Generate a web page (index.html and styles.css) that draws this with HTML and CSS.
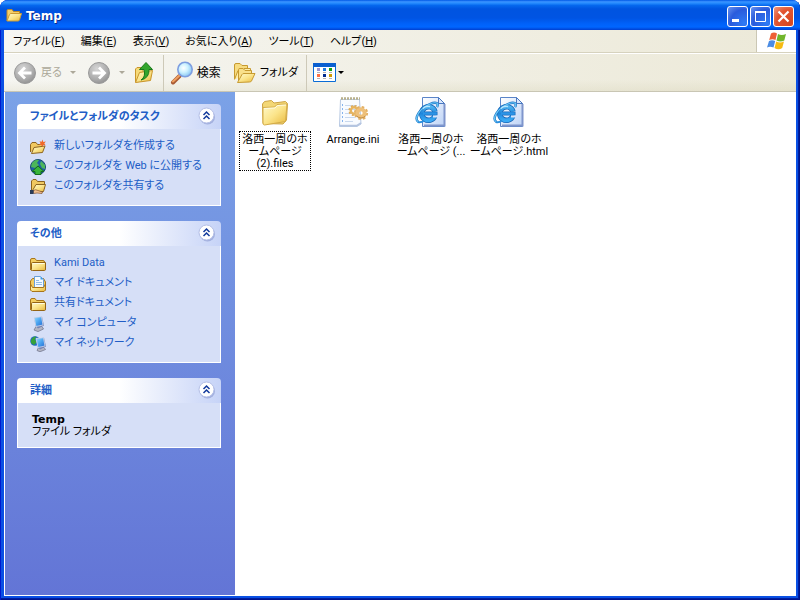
FILE: index.html
```html
<!DOCTYPE html>
<html lang="ja">
<head>
<meta charset="utf-8">
<title>Temp</title>
<link rel="stylesheet" href="styles.css">
</head>
<body>
<svg class="defs" aria-hidden="true">
  <defs>
    <linearGradient id="gold" x1="0" y1="0" x2="1" y2="1"><stop offset="0" stop-color="#fffbd0"/><stop offset=".5" stop-color="#fbe48a"/><stop offset="1" stop-color="#e8b83c"/></linearGradient>
    <linearGradient id="paper" x1="0" y1="0" x2="1" y2="1"><stop offset="0" stop-color="#ffffff"/><stop offset="1" stop-color="#bcd2f6"/></linearGradient>
    <radialGradient id="grey" cx=".4" cy=".3" r=".75"><stop offset="0" stop-color="#d6d6d6"/><stop offset=".7" stop-color="#a9a9a9"/><stop offset="1" stop-color="#8f8f8f"/></radialGradient>
    <radialGradient id="lens" cx=".4" cy=".4" r=".6"><stop offset="0" stop-color="#ffffff"/><stop offset=".5" stop-color="#cdf2ff"/><stop offset="1" stop-color="#8cc8f4"/></radialGradient>
    <linearGradient id="eblue" x1="0" y1="0" x2="0" y2="1"><stop offset="0" stop-color="#4fb4f0"/><stop offset=".5" stop-color="#1e86dc"/><stop offset="1" stop-color="#3aaaf4"/></linearGradient>
    <linearGradient id="screen" x1="0" y1="0" x2="1" y2="1"><stop offset="0" stop-color="#9adcff"/><stop offset=".5" stop-color="#4aa4f0"/><stop offset="1" stop-color="#2468d0"/></linearGradient>
    <symbol id="folder" viewBox="0 0 16 16">
      <path d="M.5 13.500V4Q.5 2.500 2 2.500H5L6.500 4.500H13Q14.500 4.500 14.500 6V13.500Z" fill="#f3cd60" stroke="#a8751a"/>
      <path d="M1.500 13.500V7.500Q1.500 6.500 2.500 6.500H15.500V13Q15.500 14.500 14.500 14.500H2.500Q.5 14.500 .5 13" fill="url(#gold)" stroke="#946414"/>
      <path d="M3 7.500H14.500" stroke="#fffbe0"/>
    </symbol>
    <symbol id="chevrons" viewBox="0 0 18 18">
      <circle cx="9.500" cy="10" r="7.500" fill="#8796cf" opacity=".6"/>
      <circle cx="8.500" cy="8.500" r="7.500" fill="#fff" stroke="#b4bfe6"/>
      <path d="M5.500 8L8.500 5L11.500 8M5.500 12L8.500 9L11.500 12" fill="none" stroke="#123a9c" stroke-width="1.500"/>
    </symbol>
    <symbol id="iepage" viewBox="0 0 32 32">
      <path d="M7.500 1.500H23.500L29.500 7.500V30.500H7.500Z" fill="url(#paper)" stroke="#5a84c8"/>
      <path d="M29.500 8V29.500H9" fill="none" stroke="#7f95cc" stroke-width="2"/>
      <path d="M23.500 1.500V7.500H29.500Z" fill="#d7e6fc" stroke="#4a78c0"/>
      <path d="M20 19.500A6.800 6.800 0 1 1 20 15.500" fill="none" stroke="#1666b8" stroke-width="5.400"/>
      <path d="M8 17.500H22.500" stroke="#1666b8" stroke-width="4"/>
      <path d="M20 19.500A6.800 6.800 0 1 1 20 15.500" fill="none" stroke="url(#eblue)" stroke-width="4"/>
      <path d="M8 17.500H21.800" stroke="#2c94e6" stroke-width="2.600"/>
      <path d="M18 20.500H23" stroke="#d4e3fb" stroke-width="2"/>
      <path d="M3.500 26C-2 23 5 12 15 8C21 5.500 24.500 7 22 11" fill="none" stroke="#1b70c4" stroke-width="2.400"/>
      <path d="M3.500 26C-2 23 5 12 15 8C21 5.500 24.500 7 22 11" fill="none" stroke="#6acaf8" stroke-width="1.200"/>
      <path d="M3 26Q6 27 9 24.500" fill="none" stroke="#2c90de" stroke-width="2"/>
      <path d="M8 12.500Q11 9.500 15 10.500" fill="none" stroke="#b4e6ff" stroke-width="1.400"/>
    </symbol>
  </defs>
</svg>
<div class="window">
  <header class="titlebar">
    <svg class="icon16" viewBox="0 0 16 16"><path d="M1 13V2.500Q1 1.500 2.500 1.500H6L7.500 3.500H13.500V7" fill="#f4cf6a" stroke="#c08a24"/><path d="M1 13L3.500 6.500Q4 5.500 5 5.500H15.500L13.500 12Q13 13 12 13Z" fill="url(#gold)" stroke="#c99a34"/></svg>
    <h1 class="title">Temp</h1>
    <button class="caption" aria-label="最小化"><svg viewBox="0 0 21 21"><path d="M5 14.500H12" stroke="#fff" stroke-width="3"/></svg></button>
    <button class="caption" aria-label="最大化"><svg viewBox="0 0 21 21"><path d="M5.500 5.500H15.500V15.500H5.500Z" fill="none" stroke="#fff"/><path d="M5 6H16" stroke="#fff" stroke-width="2"/></svg></button>
    <button class="caption close" aria-label="閉じる"><svg viewBox="0 0 21 21"><path d="M5.500 5.500L15.500 15.500M15.500 5.500L5.500 15.500" stroke="#fff" stroke-width="2.200"/></svg></button>
  </header>

  <div class="client">
    <div class="menurow">
      <nav class="menus">
        <button>ファイル(<u>F</u>)</button>
        <button>編集(<u>E</u>)</button>
        <button>表示(<u>V</u>)</button>
        <button>お気に入り(<u>A</u>)</button>
        <button>ツール(<u>T</u>)</button>
        <button>ヘルプ(<u>H</u>)</button>
      </nav>
      <div class="flag">
        <svg viewBox="0 0 22 20">
          <path d="M5 2.500Q8 .5 11 2.500L9.500 9Q6.500 7.500 3.200 9Z" fill="#ee6035"/>
          <path d="M12 3Q15.500 5 20 3L18.300 9.500Q14.500 11.500 10.500 9.500Z" fill="#71b62c"/>
          <path d="M3 10Q6 8.500 9.200 10L7.500 16.500Q4 15 1 16.500Z" fill="#4b8ce4"/>
          <path d="M10.200 10.500Q14 12.500 18 10.500L16.200 17Q12.500 19.500 8.500 17Z" fill="#f6bb12"/>
        </svg>
      </div>
    </div>

    <div class="toolbar">
      <button class="tool dim">
        <svg class="icon24" viewBox="0 0 24 24"><circle cx="12" cy="12" r="10.500" fill="url(#grey)" stroke="#9a9a9a"/><path d="M18.500 12H7M12 6.500L6.500 12L12 17.500" fill="none" stroke="#fff" stroke-width="2.800"/></svg>
        <span>戻る</span><i class="arrow"></i>
      </button>
      <button class="tool dim forward" aria-label="進む">
        <svg class="icon24" viewBox="0 0 24 24"><circle cx="12" cy="12" r="10.500" fill="url(#grey)" stroke="#9a9a9a"/><path d="M5.500 12H17M12 6.500L17.500 12L12 17.500" fill="none" stroke="#fff" stroke-width="2.800"/></svg>
        <i class="arrow"></i>
      </button>
      <button class="tool up" aria-label="上へ">
        <svg class="icon24" viewBox="0 0 24 24"><path d="M2.500 21V8L4 6.500H8L10 8.500V20Z" fill="#f6da78" stroke="#c9962c"/><path d="M2.500 21.500L6.500 11.500L19.500 9.500L17.500 19.500Z" fill="url(#gold)" stroke="#c9962c"/><path d="M8 19Q13 16 11 8.500H6.500L13 1.500L19.500 8.500H16Q16.500 17 8 19Z" fill="#33a52c" stroke="#187a18"/></svg>
      </button>
      <span class="rule"></span>
      <button class="tool search">
        <svg class="icon24" viewBox="0 0 24 24"><path d="M9.500 15L3 21.500" stroke="#a85a34" stroke-width="4" stroke-linecap="round"/><path d="M9.500 14.500L3 20.500" stroke="#f0a060" stroke-width="2" stroke-linecap="round"/><circle cx="15" cy="8.500" r="7.200" fill="url(#lens)" stroke="#7e9ee0" stroke-width="1.600"/></svg>
        <span>検索</span>
      </button>
      <button class="tool folders">
        <svg class="icon24" viewBox="0 0 24 24"><path d="M1.500 18V4Q1.500 2.500 3 2.500H7L9 4.500H14.500V9" fill="#f7dc80" stroke="#c79a30"/><path d="M1.500 18.500L5 9.500H9L11 7.500H17.500V12" fill="#fdeeaa" stroke="#c79a30"/><path d="M5.500 20V8.500Q5.500 7.500 7 7.500H10L12 9.500H18.500V13" fill="#f9e08a" stroke="#c79a30"/><path d="M4.500 21.500L9 13.500Q9.500 12.500 11 12.500H22L18.500 20Q18 21 16.500 21Z" fill="url(#gold)" stroke="#c79a30"/></svg>
        <span>フォルダ</span>
      </button>
      <span class="rule"></span>
      <button class="tool views" aria-label="表示">
        <svg class="viewicon" viewBox="0 0 23 19"><path d="M.5 .5H22.500V18.500H.5Z" fill="#fff" stroke="#0a6cd6"/><path d="M0 2H23" stroke="#0a5fd0" stroke-width="4"/><path d="M4 5H7V8H4Z" fill="#9a94d0"/><path d="M10 5H13V8H10Z" fill="#1f7be0"/><path d="M16 5H19V8H16Z" fill="#10a010"/><path d="M4 11H7V14H4Z" fill="#ff7044"/><path d="M10 11H13V14H10Z" fill="#002b90"/><path d="M16 11H19V14H16Z" fill="#d09a00"/><path d="M4 9.500H7M10 9.500H13M16 9.500H19M4 15.500H7M10 15.500H13M16 15.500H19" stroke="#b4b4b4"/></svg>
        <i class="arrow"></i>
      </button>
    </div>

    <div class="body">
      <aside class="tasks">
        <section class="panel">
          <div class="head"><h2>ファイルとフォルダのタスク</h2><button class="toggle" aria-label="折りたたむ"><svg><use href="#chevrons"/></svg></button></div>
          <ul>
            <li><a href="#"><svg class="icon16" viewBox="0 0 16 16"><path d="M.5 13V5.500L2 3.500H6L7.500 5.500H12.500V8" fill="#f0c860" stroke="#8c6420"/><path d="M1.500 14.500L4 8.500L15 7L12.500 13.500Z" fill="url(#gold)" stroke="#8c6420"/><path d="M12.500 .5L13.300 3L15.800 2.500L14.300 4.600L15.800 6.500L13.300 6L12.200 8L11.300 6L9 6L10.500 4.300L9.500 2.300L11.700 2.800Z" fill="#f06a28"/></svg><span>新しいフォルダを作成する</span></a></li>
            <li><a href="#"><svg class="icon16" viewBox="0 0 16 16"><circle cx="8" cy="8" r="7.500" fill="#1f5fa8" stroke="#174b70"/><path d="M2 4Q5 0 9 1L7 4L9 6L5 9L1 8ZM11 2L15 6V10L12 9L10 5Z" fill="#4cb65a"/><path d="M8 7L14 12.500H11V15.500H5V12.500H2Z" fill="#38b53a" stroke="#136b1c"/></svg><span>このフォルダを Web に公開する</span></a></li>
            <li><a href="#"><svg class="icon16" viewBox="0 0 16 16"><path d="M1.500 11V2L3 .5H6L7.500 2.500H14.500V10" fill="#f0c860" stroke="#8c6420"/><path d="M2.500 11.500L6 5.500H15.500L13.500 12.500H7Z" fill="url(#gold)" stroke="#8c6420"/><path d="M3.500 11.500Q5.500 10 8 11.500L12.500 13L12 14.500L7 14L3.500 14.500Z" fill="#f0c090" stroke="#805030" stroke-width=".7"/><path d="M0 11H3.500V15H0Z" fill="#2b3c58"/></svg><span>このフォルダを共有する</span></a></li>
          </ul>
        </section>
        <section class="panel">
          <div class="head"><h2>その他</h2><button class="toggle" aria-label="折りたたむ"><svg><use href="#chevrons"/></svg></button></div>
          <ul>
            <li><a href="#"><svg class="icon16"><use href="#folder"/></svg><span>Kami Data</span></a></li>
            <li><a href="#"><svg class="icon16" viewBox="0 0 16 16"><path d="M.5 14V5L2.500 2.500H13.500L15.500 6V14Z" fill="#f2cb60" stroke="#a8751a"/><path d="M4.500 12V.5H10.500L13.500 3.500V12Z" fill="#f4faff" stroke="#6aa0d8"/><path d="M10.500 .5V3.500H13.500Z" fill="#3b9ce8"/><path d="M6 4.500H9M6 6.500H12M6 8.500H12" stroke="#92bde8"/><path d="M.5 8V14L2 15.500H14L15.500 14V8L13.500 11.500H2.500Z" fill="url(#gold)" stroke="#a8751a"/></svg><span>マイ ドキュメント</span></a></li>
            <li><a href="#"><svg class="icon16"><use href="#folder"/></svg><span>共有ドキュメント</span></a></li>
            <li><a href="#"><svg class="icon16" viewBox="0 0 16 16"><path d="M4 14L6 10.500H12L13.500 13L8 15.600Z" fill="#b4b6c4" stroke="#6a6e86" stroke-width=".7"/><path d="M4 1.500L12 .7L14 9.500L8 12.500L5.500 10Z" fill="#7684b4"/><path d="M4 1.500L11.500 .7L13 9L6 10.500Z" fill="url(#screen)" stroke="#d5dbee" stroke-width=".8"/></svg><span>マイ コンピュータ</span></a></li>
            <li><a href="#"><svg class="icon16" viewBox="0 0 16 16"><circle cx="5" cy="5" r="4.800" fill="#1e68c4"/><path d="M1 4Q3 0 6 .5L5 4L7 6L4 9L1 7Z" fill="#35a13a"/><path d="M7 14.500L8.500 11.500H14L15.500 13.500L10 15.800Z" fill="#b4b6c4" stroke="#6a6e86" stroke-width=".7"/><path d="M6 2.500L14 1.700L16 10.500L10 13.500L7.500 11Z" fill="#7684b4"/><path d="M6 2.500L13.500 1.700L15 10L8 11.500Z" fill="url(#screen)" stroke="#d5dbee" stroke-width=".8"/></svg><span>マイ ネットワーク</span></a></li>
          </ul>
        </section>
        <section class="panel">
          <div class="head"><h2>詳細</h2><button class="toggle" aria-label="折りたたむ"><svg><use href="#chevrons"/></svg></button></div>
          <div class="details"><b>Temp</b><span>ファイル フォルダ</span></div>
        </section>
      </aside>

      <main class="files">
        <a class="file focused" href="#">
          <svg viewBox="0 0 32 32"><path d="M4 27.500L3.500 8L5.500 5.500L12.500 4.500L15 7L26.500 5.500L28.500 7.500L27.500 24L24 28Z" fill="#f3d775" stroke="#cda445"/><path d="M4 11.500L15.500 11L18 8.500L28 8L26.500 25.500L5.500 29Q4 29 4 27Z" fill="url(#gold)" stroke="#d4ac48"/><path d="M5 12.500L16 12L18.500 9.500L27 9" fill="none" stroke="#fffbe0"/></svg>
          <span>洛西一周のホ<br>ームページ<br>(2).files</span>
        </a>
        <a class="file" href="#">
          <svg viewBox="0 0 32 32"><path d="M3.500 3.500H22.500L24 28L20 30.500H2.500Z" fill="#f8fbff" stroke="#b6c8e2"/><path d="M3 29.500H20L24 27" fill="none" stroke="#b4c4e0" stroke-width="1.600"/><path d="M4 2.500H23" stroke="#b8b08c" stroke-width="2.400" stroke-dasharray="2 1"/><path d="M8 9.500H20M8 13.500H19M8 17.500H19M8 21.500H18M8 25.500H16" stroke="#c8d8ee"/><path d="M5.500 8V27" stroke="#86b4ee" stroke-dasharray="2 2"/><circle cx="17" cy="14.500" r="3.200" fill="none" stroke="#e6b45e" stroke-width="2.400"/><circle cx="17" cy="14.500" r="4.800" fill="none" stroke="#e0aa54" stroke-width="1.600" stroke-dasharray="2 1.770"/><circle cx="24" cy="17" r="3.700" fill="none" stroke="#eec07a" stroke-width="4"/><circle cx="24" cy="17" r="6.200" fill="none" stroke="#e3b064" stroke-width="1.800" stroke-dasharray="2.600 2.270"/><path d="M19.500 20Q24 24 28.500 20" fill="none" stroke="#c08c44"/></svg>
          <span>Arrange.ini</span>
        </a>
        <a class="file" href="#"><svg><use href="#iepage"/></svg><span>洛西一周のホ<br>ームページ (...</span></a>
        <a class="file" href="#"><svg><use href="#iepage"/></svg><span>洛西一周のホ<br>ームページ.html</span></a>
      </main>
    </div>
  </div>
</div>
</body>
</html>
```
FILE: styles.css
```css
* { box-sizing: border-box; }

body {
  margin: 0;
  background: #fff;
  color: #000;
  font: 11px/12px Roboto, "Noto Sans CJK JP", sans-serif;
  font-feature-settings: "palt";
}

button {
  margin: 0;
  padding: 0;
  border: 0;
  background: none;
  color: inherit;
  font: inherit;
  font-feature-settings: inherit;
}

a { color: inherit; text-decoration: none; }
svg { display: block; flex: none; }
.defs { position: absolute; width: 0; height: 0; }
.icon16 { width: 16px; height: 16px; }
.icon24 { width: 24px; height: 24px; }

.window {
  display: flex;
  flex-direction: column;
  min-height: 100vh;
  padding: 0 4px 4px;
  border-radius: 8px 8px 0 0;
  background: #0a50e4;
  box-shadow: inset 1px 0 #0019cf, inset -1px -1px #00138c, inset -2px -2px #001ea0;
}

.titlebar {
  display: flex;
  align-items: center;
  gap: 2px;
  height: 30px;
  margin: 0 -4px;
  padding: 2px 6px 0;
  border-radius: 8px 8px 0 0;
  background: linear-gradient(#0058e6 0, #3b93ff 6%, #288eff 10%, #0568ee 18%, #0054e0 30%, #0054e3 60%, #0062fa 80%, #0066ff 90%, #003fd0 100%);
}

.title {
  flex: 1;
  margin: 0 0 0 2px;
  color: #fff;
  font: bold 12px/16px "DejaVu Sans", sans-serif;
  text-shadow: 1px 1px #0a2a8c;
}

.caption {
  width: 21px;
  height: 21px;
  border: 1px solid #fff;
  border-radius: 3px;
  background: radial-gradient(circle at 85% 85%, #2f7bf5, #2a5bdc 60%, #6a94f0 100%);
}
.caption svg { margin: -1px; width: 21px; height: 21px; }
.caption.close { background: radial-gradient(circle at 85% 85%, #d84820, #e25430 60%, #f09a80 100%); }

.client {
  display: flex;
  flex: 1;
  flex-direction: column;
  background: linear-gradient(90deg, #f6f6f2, #ece9d8);
}

.menurow { display: flex; height: 23px; border-bottom: 1px solid #d6d2be; }
.menus { display: flex; flex: 1; align-items: center; gap: 16px; padding: 1px 0 0 9px; }
.menus u { text-underline-offset: 1px; }

.flag {
  display: flex;
  align-items: center;
  justify-content: center;
  width: 40px;
  border-left: 1px solid #cbc7b4;
  background: #fff;
}
.flag svg { width: 22px; height: 20px; }

.toolbar {
  display: flex;
  align-items: center;
  height: 39px;
  padding-left: 9px;
  border-top: 1px solid #fff;
  border-bottom: 1px solid #c9c6b4;
  background: linear-gradient(transparent 70%, rgba(200, 196, 160, .2));
}
.tool { display: flex; align-items: center; gap: 3px; }
.dim { gap: 4px; color: #aca899; }
.forward { margin-left: 11px; }
.up { margin-left: 8px; }
.arrow { border: 3px solid transparent; border-top-color: currentColor; border-bottom: 0; }
.dim .arrow { margin-left: 4px; }
.rule { width: 1px; height: 36px; margin: 0 6px; background: #cdc9b8; }
.search span { font-size: 12px; }
.folders { margin-left: 12px; }
.folders + .rule { margin-left: 8px; }
.views { gap: 2px; }
.viewicon { width: 23px; height: 19px; }

.body {
  display: flex;
  flex: 1;
  border: solid #fff;
  border-width: 0 0 1px 1px;
  background: #fff;
}

.tasks {
  display: flex;
  flex: 0 0 230px;
  flex-direction: column;
  gap: 15px;
  padding: 12px 14px 12px 12px;
  background: linear-gradient(#7ba2e7, #6375d6);
}

.panel .head {
  display: flex;
  align-items: center;
  justify-content: space-between;
  height: 25px;
  padding: 0 5px 0 13px;
  border-radius: 4px 4px 0 0;
  background: linear-gradient(90deg, #fff 50%, #c6d3f7);
}
.panel h2 { margin: 0; color: #215dc6; font-size: 11px; font-weight: bold; line-height: 16px; }
.toggle { margin-bottom: 2px; }
.toggle svg { width: 18px; height: 18px; }

.panel ul, .details {
  margin: 0;
  border: 1px solid #fff;
  border-top: 0;
  background: #d6dff7;
}
.panel ul { padding: 7px 12px 9px; list-style: none; }
.panel li a { display: flex; align-items: center; gap: 8px; height: 20px; color: #215dc6; white-space: nowrap; }
.panel li .icon16 { margin-top: 2px; }
.details { display: flex; flex-direction: column; padding: 11px 14px 9px; }
.details b { font-family: "DejaVu Sans", sans-serif; font-size: 11px; }

.files {
  display: flex;
  flex: 1;
  flex-wrap: wrap;
  align-content: flex-start;
  padding: 4px 1px;
}
.file {
  display: flex;
  flex-direction: column;
  align-items: center;
  gap: 3px;
  width: 78px;
  text-align: center;
  white-space: nowrap;
}
.file svg { width: 32px; height: 32px; }
.file span { padding: 2px 2px 0; border: 1px solid transparent; }
.focused span { border: 1px dotted #000; }
```
